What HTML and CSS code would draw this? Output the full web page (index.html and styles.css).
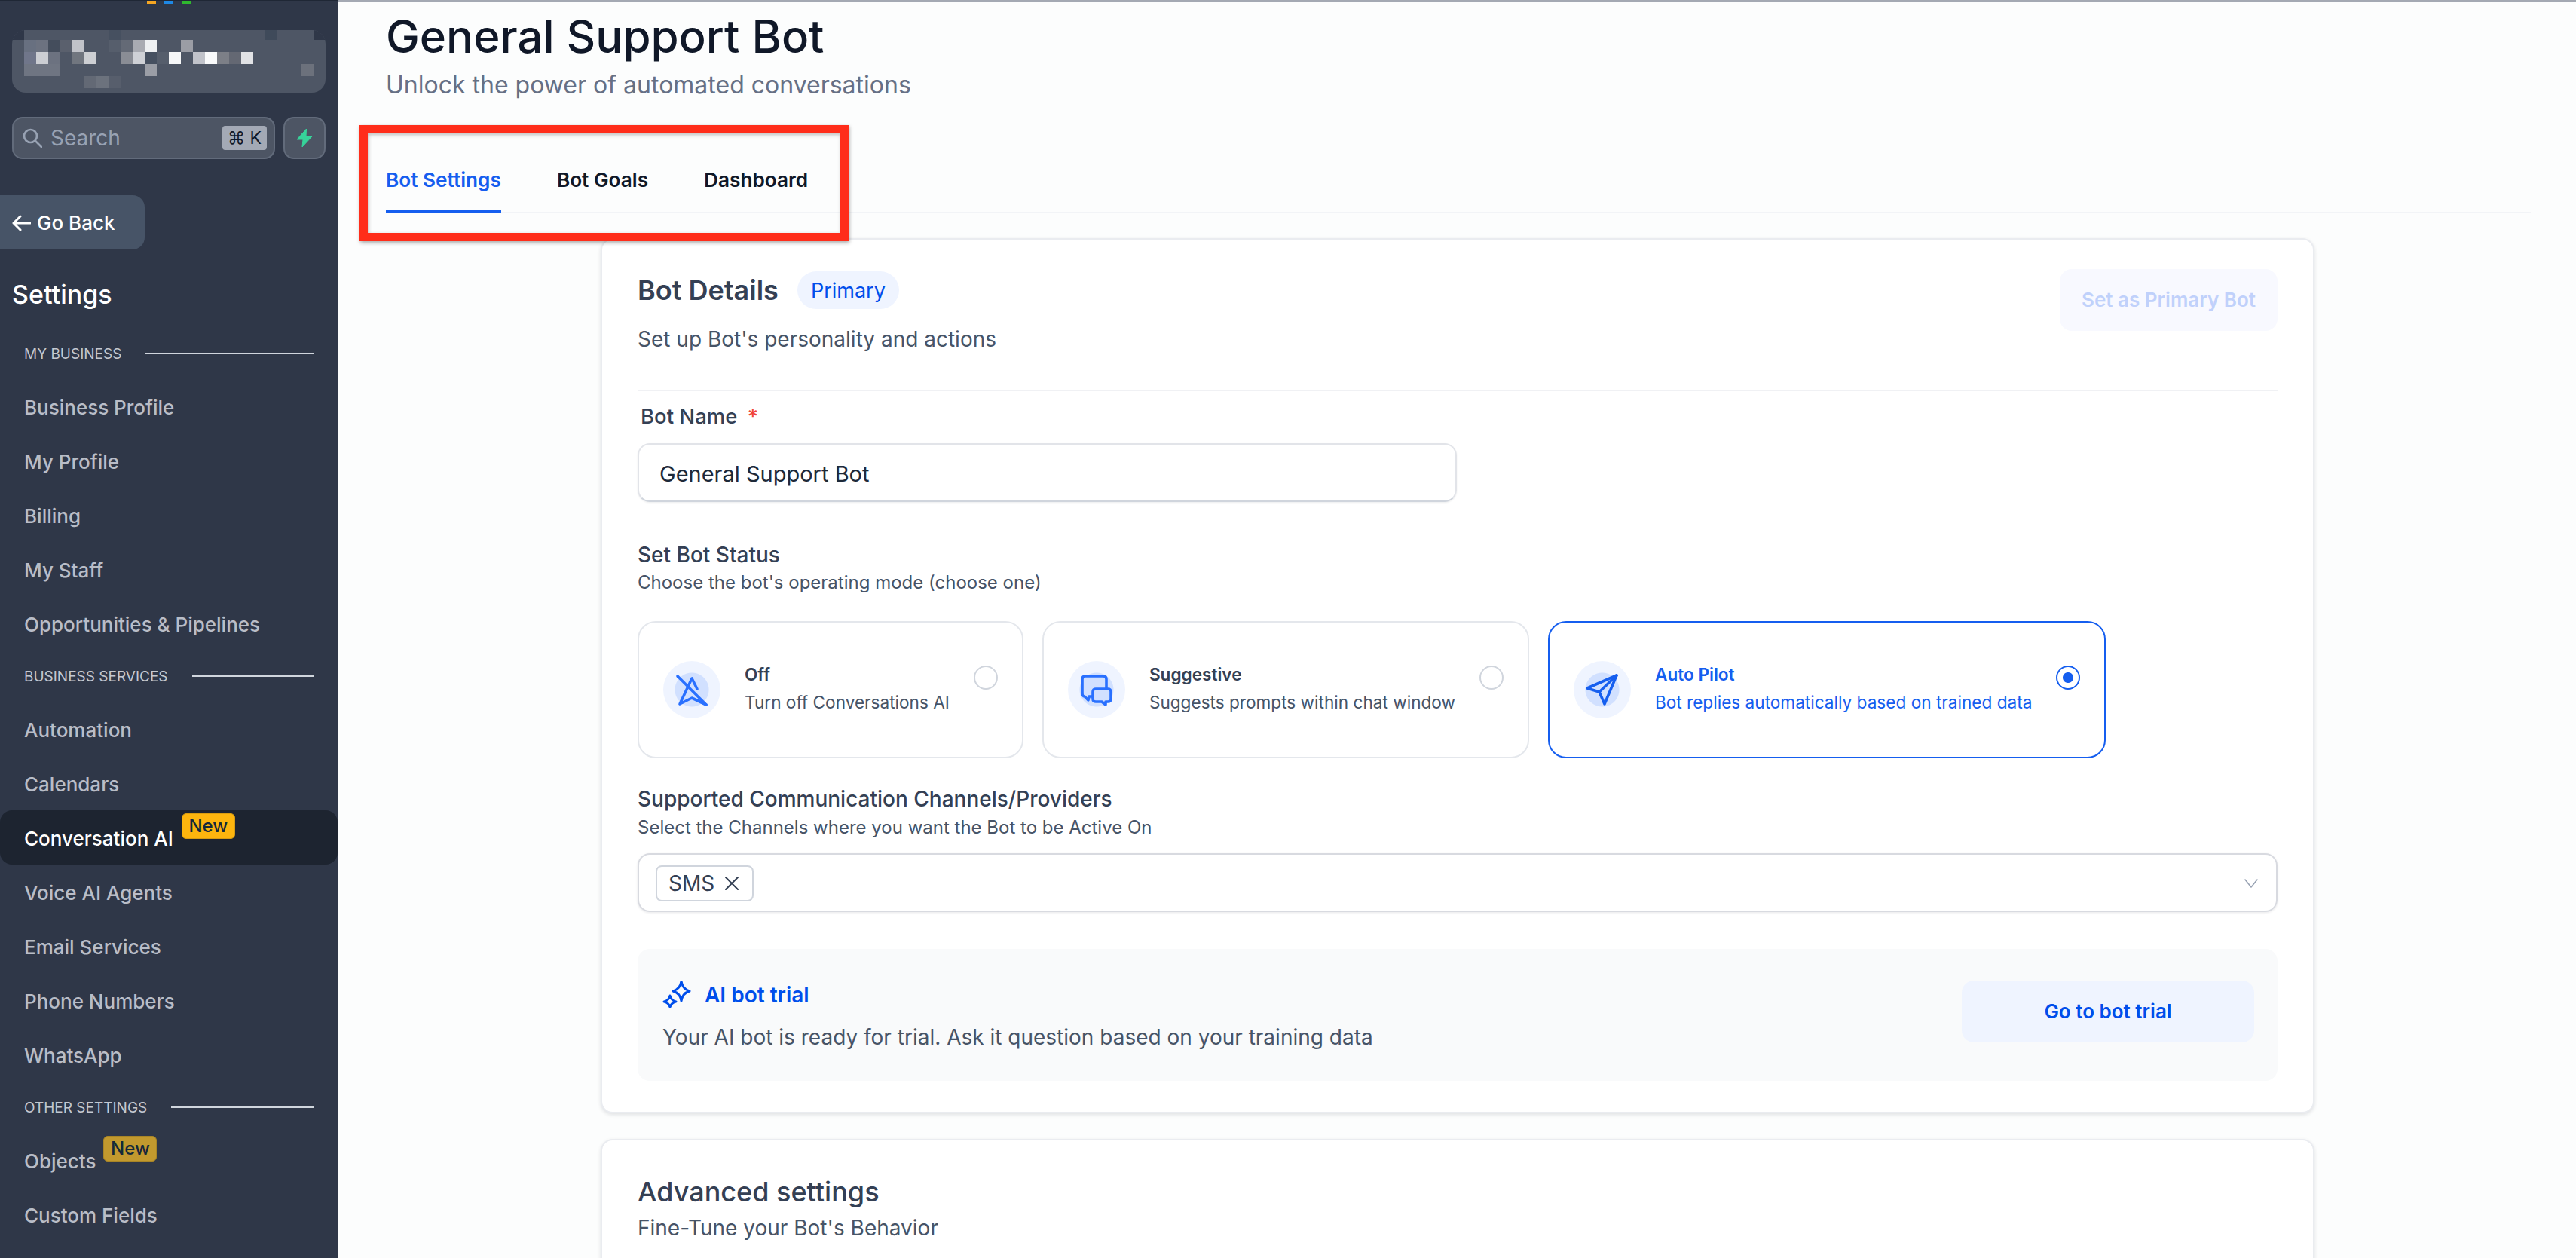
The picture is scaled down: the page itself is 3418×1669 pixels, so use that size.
FILE: index.html
```html
<!DOCTYPE html>
<html lang="en">
<head>
<meta charset="utf-8">
<title>General Support Bot</title>
<link rel="stylesheet" href="styles.css">
</head>
<body>
<div class="app">
  <aside class="sidebar">
    <div class="dots"><i class="dot dot-o"></i><i class="dot dot-b"></i><i class="dot dot-g"></i></div>
    <div class="account">
      <svg width="416" height="83" viewBox="0 0 416 83" shape-rendering="crispEdges">
        <rect x="0" y="0" width="16" height="13" fill="#2f3748"/>
        <rect x="16" y="0" width="384" height="13" fill="#4e5665"/>
        <rect x="128" y="0" width="16" height="13" fill="#465060"/>
        <rect x="336" y="0" width="16" height="13" fill="#3f4a5a"/>
        <rect x="400" y="0" width="16" height="13" fill="#2f3748"/>
        <rect x="16" y="13" width="16" height="16" fill="#687080"/>
        <rect x="32" y="13" width="16" height="16" fill="#6c7280"/>
        <rect x="48" y="13" width="16" height="16" fill="#444d5c"/>
        <rect x="64" y="13" width="16" height="16" fill="#5a606d"/>
        <rect x="80" y="13" width="16" height="16" fill="#c1c3c9"/>
        <rect x="128" y="13" width="16" height="16" fill="#565e6c"/>
        <rect x="144" y="13" width="16" height="16" fill="#646a76"/>
        <rect x="160" y="13" width="16" height="16" fill="#a9abb2"/>
        <rect x="176" y="13" width="16" height="16" fill="#eef0f2"/>
        <rect x="224" y="13" width="16" height="16" fill="#9b9da5"/>
        <rect x="16" y="29" width="16" height="16" fill="#70768a"/>
        <rect x="32" y="29" width="16" height="16" fill="#ccced3"/>
        <rect x="48" y="29" width="16" height="16" fill="#6c7280"/>
        <rect x="80" y="29" width="16" height="16" fill="#71767f"/>
        <rect x="96" y="29" width="16" height="16" fill="#cdcfd3"/>
        <rect x="144" y="29" width="16" height="16" fill="#8a8d95"/>
        <rect x="160" y="29" width="16" height="16" fill="#cfd1d6"/>
        <rect x="176" y="29" width="16" height="16" fill="#465060"/>
        <rect x="192" y="29" width="16" height="16" fill="#565e6c"/>
        <rect x="208" y="29" width="16" height="16" fill="#f6f7f8"/>
        <rect x="240" y="29" width="16" height="16" fill="#c1c3ca"/>
        <rect x="256" y="29" width="16" height="16" fill="#f9fafb"/>
        <rect x="272" y="29" width="16" height="16" fill="#7c7f87"/>
        <rect x="288" y="29" width="16" height="16" fill="#646873"/>
        <rect x="304" y="29" width="16" height="16" fill="#e1e2e5"/>
        <rect x="16" y="45" width="48" height="16" fill="#6f7582"/>
        <rect x="176" y="45" width="16" height="16" fill="#9b9ea6"/>
        <rect x="384" y="45" width="16" height="16" fill="#6c717c"/>
        <rect x="96" y="61" width="16" height="16" fill="#636975"/>
        <rect x="112" y="61" width="16" height="16" fill="#6c727d"/>
        <rect x="128" y="61" width="16" height="16" fill="#575e6c"/>
      </svg>
    </div>
    <div class="search-row">
      <div class="search">
        <svg class="search-icon" width="26" height="26" viewBox="0 0 26 26" fill="none" stroke="#98a2b3" stroke-width="2.6" stroke-linecap="round"><circle cx="10.5" cy="10.5" r="8.5"/><line x1="17" y1="17" x2="25" y2="25"/></svg>
        <span class="search-text">Search</span>
        <kbd class="kbd">⌘ K</kbd>
      </div>
      <div class="bolt">
        <svg width="22" height="24" viewBox="0 0 22 24"><path d="M13.5 0 L1 14 L9 14 L8 24 L21 10 L13 10 Z" fill="#37d39a" stroke="#37d39a" stroke-width="1" stroke-linejoin="round"/></svg>
      </div>
    </div>
    <a class="back">
      <svg width="25" height="22" viewBox="0 0 25 22" fill="none" stroke="#fff" stroke-width="3" stroke-linecap="round" stroke-linejoin="round"><path d="M24 11H2M11 2L2 11l9 9"/></svg>
      <span>Go Back</span>
    </a>
    <h2 class="side-title">Settings</h2>
    <nav class="nav">
      <div class="section"><span>MY BUSINESS</span><i></i></div>
      <a class="item">Business Profile</a>
      <a class="item">My Profile</a>
      <a class="item">Billing</a>
      <a class="item">My Staff</a>
      <a class="item">Opportunities &amp; Pipelines</a>
      <div class="section"><span>BUSINESS SERVICES</span><i></i></div>
      <a class="item">Automation</a>
      <a class="item">Calendars</a>
      <a class="item active">Conversation AI<b class="new">New</b></a>
      <a class="item">Voice AI Agents</a>
      <a class="item">Email Services</a>
      <a class="item">Phone Numbers</a>
      <a class="item">WhatsApp</a>
      <div class="section"><span>OTHER SETTINGS</span><i></i></div>
      <a class="item">Objects<b class="new new-dim">New</b></a>
      <a class="item">Custom Fields</a>
    </nav>
  </aside>

  <main class="main">
    <h1 class="page-title">General Support Bot</h1>
    <p class="page-sub">Unlock the power of automated conversations</p>
    <div class="tabs">
      <a class="tab tab-active">Bot Settings</a>
      <a class="tab">Bot Goals</a>
      <a class="tab">Dashboard</a>
    </div>
    <div class="annotation"></div>

    <section class="card">
      <div class="card-head">
        <div>
          <div class="head-title"><h3 class="h3">Bot Details</h3><span class="pill">Primary</span></div>
          <p class="head-sub">Set up Bot's personality and actions</p>
        </div>
        <button class="btn-disabled">Set as Primary Bot</button>
      </div>
      <div class="divider"></div>
      <label class="bot-label">Bot Name <span class="req">*</span></label>
      <div class="input">General Support Bot</div>

      <div class="field-title status-title">Set Bot Status</div>
      <div class="field-sub">Choose the bot's operating mode (choose one)</div>
      <div class="modes">
        <div class="mode">
          <span class="ring"><svg width="76" height="76" viewBox="0 0 76 76" fill="none" stroke="#2970ff" stroke-width="3.6" stroke-linecap="round" stroke-linejoin="round"><path d="M45 37L38 23L22 57L38 49L57 58"/><path d="M19 20L57 58"/></svg></span>
          <div class="mode-text"><div class="mode-title">Off</div><div class="mode-desc">Turn off Conversations AI</div></div>
          <i class="radio"></i>
        </div>
        <div class="mode">
          <span class="ring"><svg width="76" height="76" viewBox="0 0 76 76" fill="none" stroke="#2970ff" stroke-width="3.6" stroke-linecap="round" stroke-linejoin="round"><path d="M33 47H28L27 52L22 47C20 47 19 45 19 43V24C19 21 21 20 23 20H47C49 20 51 21 51 24V37"/><path d="M37 37H53C56 37 57 38 57 41V50C57 53 56 54 53 54H50V58L45 54H37C34 54 33 53 33 50V41C33 38 34 37 37 37Z"/></svg></span>
          <div class="mode-text"><div class="mode-title">Suggestive</div><div class="mode-desc">Suggests prompts within chat window</div></div>
          <i class="radio"></i>
        </div>
        <div class="mode mode-on">
          <span class="ring"><svg width="76" height="76" viewBox="0 0 76 76" fill="none" stroke="#155eef" stroke-width="3.6" stroke-linecap="round" stroke-linejoin="round"><path d="M57 19L18 36L34 41L41 57Z"/><path d="M34 41L57 19"/></svg></span>
          <div class="mode-text"><div class="mode-title">Auto Pilot</div><div class="mode-desc">Bot replies automatically based on trained data</div></div>
          <i class="radio radio-on"></i>
        </div>
      </div>

      <div class="field-title channels-title">Supported Communication Channels/Providers</div>
      <div class="field-sub channels-sub">Select the Channels where you want the Bot to be Active On</div>
      <div class="select">
        <span class="chip">SMS<svg width="18" height="18" viewBox="0 0 18 18" fill="none" stroke="#344054" stroke-width="2" stroke-linecap="round"><path d="M1 1L17 17M17 1L1 17"/></svg></span>
        <svg class="chev" width="18" height="12" viewBox="0 0 18 12" fill="none" stroke="#98a2b3" stroke-width="1.6" stroke-linecap="round" stroke-linejoin="round"><path d="M1 1L9 11L17 1"/></svg>
      </div>

      <div class="trial">
        <div>
          <div class="trial-title">
            <svg width="38" height="36" viewBox="0 0 38 36" fill="none" stroke="#004eeb" stroke-width="3" stroke-linejoin="round"><path d="M25 1C26 8 29 12 36 14C29 16 26 20 25 27C24 20 21 16 14 14C21 12 24 8 25 1Z"/><path d="M10 20C11 24 13 27 18 28C13 29 11 32 10 35C9 32 7 29 2 28C7 27 9 24 10 20Z"/></svg>
            <span class="trial-name">AI bot trial</span>
          </div>
          <p class="trial-desc">Your AI bot is ready for trial. Ask it question based on your training data</p>
        </div>
        <button class="btn-trial">Go to bot trial</button>
      </div>
    </section>

    <section class="card card-2">
      <h3 class="adv-title">Advanced settings</h3>
      <p class="adv-sub">Fine-Tune your Bot's Behavior</p>
    </section>
  </main>
</div>
</body>
</html>
```
FILE: styles.css
```css
* { box-sizing: border-box; }
html, body { margin: 0; height: 100%; overflow: hidden; }
body { font-family: Inter, "DejaVu Sans", sans-serif; color: #344054; background: #fcfdfd; }
h1, h2, h3, p { margin: 0; font-weight: inherit; }
button { font-family: inherit; border: 0; }
kbd { font-family: inherit; }

.app { display: flex; height: 1669px; }

/* sidebar */
.sidebar { width: 448px; flex: none; background: #2f3748; border-top: 1px solid #1f2735; overflow: hidden; }
.dots { display: flex; gap: 11px; height: 3px; margin-left: 195px; }
.dot { display: block; width: 12px; height: 4px; }
.dot-o { background: #f5a623; }
.dot-b { background: #1e88e5; }
.dot-g { background: #2fb82f; }
.account { width: 416px; height: 83px; margin: 36px 0 0 16px; border-radius: 18px; overflow: hidden; background: #4e5665; }
.account svg { display: block; }
.search-row { display: flex; gap: 11px; margin: 32px 16px 0; }
.search { flex: 1; height: 56px; display: flex; align-items: center; padding: 0 9px 0 12px; background: #4d5564; border: 2px solid #626b7b; border-radius: 14px; }
.search-text { margin-left: 11px; font-size: 28px; color: #98a2b3; }
.kbd { margin-left: auto; width: 59px; height: 32px; display: flex; align-items: center; justify-content: center; background: #a3a9b5; border-radius: 4px; color: #101828; font-size: 23px; }
.bolt { width: 56px; height: 56px; display: flex; align-items: center; justify-content: center; background: #4d5564; border: 2px solid #626b7b; border-radius: 14px; }
.back { display: flex; align-items: center; gap: 8px; width: 192px; height: 72px; margin-top: 48px; padding: 1px 0 0 16px; background: #475467; border-radius: 0 16px 16px 0; color: #fff; font-size: 26px; font-weight: 500; }
.side-title { margin: 36px 0 0 16px; font-size: 34px; line-height: 48px; font-weight: 500; color: #fff; }
.nav { margin-top: 20px; }
.section { height: 68px; display: flex; align-items: center; gap: 32px; padding: 0 32px; }
.section span { font-size: 19px; color: #c4c8d0; white-space: nowrap; }
.section i { flex: 1; height: 2px; background: #d0d5dd; }
.item { height: 72px; display: flex; align-items: center; padding: 2px 0 0 32px; border-radius: 16px; font-size: 26px; font-weight: 500; color: #b9bdc7; }
.active { background: #1d2430; color: #fff; }
.new { align-self: flex-start; margin: 2px 0 0 11px; height: 34px; line-height: 32px; width: 71px; text-align: center; background: #fdb50e; border: 1px solid #d99c10; border-radius: 6px; color: #14283a; font-size: 24px; font-weight: 500; }
.new-dim { background: #c2992e; border-color: #a98526; margin-left: 10px; }

/* main */
.main { flex: 1; min-width: 0; padding: 12px 60px 0 64px; border-top: 2px solid #a4a9b3; position: relative; }
.page-title { font-size: 60px; line-height: 68px; font-weight: 500; color: #101828; }
.page-sub { margin-top: 9px; font-size: 32px; line-height: 44px; color: #667085; }
.tabs { display: flex; gap: 74px; margin-top: 85px; border-bottom: 2px solid #f2f4f7; }
.tab { height: 63px; margin-bottom: -2px; line-height: 38px; font-size: 26.2px; font-weight: 600; color: #101828; }
.tab-active { color: #155eef; border-bottom: 4px solid #155eef; }
.annotation { position: absolute; left: 29px; top: 164px; width: 649px; height: 154px; border: 11px solid #ff2d1a; box-shadow: 1px 2px 5px rgba(0,0,0,.35), inset 1px 2px 5px rgba(0,0,0,.25); }

.card { width: 2274px; margin: 33px 0 0 285px; padding: 39px 47px 41px; background: #fff; border: 2px solid #eaecf0; border-radius: 16px; box-shadow: 0 2px 5px rgba(16,24,40,.12); }
.card-head { display: flex; justify-content: space-between; align-items: flex-start; height: 160px; }
.head-title { display: flex; align-items: center; gap: 25px; margin-top: 3px; }
.h3 { font-size: 36px; line-height: 50px; font-weight: 600; color: #344054; }
.pill { height: 50px; padding: 0 18px; display: flex; align-items: center; border-radius: 25px; background: #eff4ff; color: #004eeb; font-size: 27px; }
.head-sub { margin-top: 22px; font-size: 28px; line-height: 36px; color: #475467; }
.btn-disabled { width: 289px; height: 82px; padding-bottom: 2px; border-radius: 16px; background: #f8f9ff; color: #c0d1fb; font-size: 26px; font-weight: 600; }
.divider { height: 2px; background: #f0f1f4; }
.bot-label { display: block; margin: 15px 0 0 4px; font-size: 27.5px; line-height: 36px; font-weight: 500; color: #344054; }
.req { margin-left: 6px; color: #f04438; }
.input { width: 1087px; height: 78px; margin-top: 18px; padding: 2px 0 0 27px; display: flex; align-items: center; border: 2px solid #e2e4e9; border-bottom-color: #d0d5dd; border-radius: 16px; box-shadow: 0 1px 2px rgba(16,24,40,.08); font-size: 29px; color: #1d2939; }
.field-title { font-size: 28px; line-height: 36px; font-weight: 500; color: #344054; }
.status-title { margin-top: 52px; }
.field-sub { margin-top: 3px; font-size: 24px; line-height: 32px; color: #475467; }
.channels-title { margin-top: 36px; }
.channels-sub { margin-top: 4px; }

.modes { display: flex; gap: 25px; margin-top: 35px; }
.mode { height: 182px; display: flex; align-items: center; padding: 0 32px; border: 2px solid #e4e7ec; border-radius: 24px; }
.ring { width: 76px; height: 76px; flex: none; border-radius: 50%; background: radial-gradient(circle, #d1e0ff 0 22px, #eff4ff 23px); }
.ring svg { display: block; }
.mode-text { margin-left: 32px; align-self: flex-start; margin-top: 53px; }
.mode-title { font-size: 22.6px; line-height: 32px; font-weight: 600; color: #344054; }
.mode-desc { margin-top: 5px; font-size: 22.6px; line-height: 32px; color: #475467; white-space: nowrap; }
.radio { display: block; width: 32px; height: 32px; flex: none; margin-left: 32px; align-self: flex-start; margin-top: 57px; border: 2px solid #d0d5dd; border-radius: 50%; }
.mode-on { border-color: #155eef; }
.mode-on .mode-title, .mode-on .mode-desc { color: #155eef; }
.radio-on { border-color: #155eef; background: radial-gradient(circle, #155eef 0 6.5px, #fff 7.5px); }

.select { height: 78px; margin-top: 18px; padding: 2px 24px 0 22px; display: flex; align-items: center; justify-content: space-between; border: 2px solid #d8dae0; border-radius: 16px; box-shadow: 0 1px 3px rgba(16,24,40,.1); }
.chip { width: 130px; height: 48px; padding-left: 15px; display: flex; align-items: center; gap: 14px; border: 2px solid #d0d5dd; border-radius: 8px; font-size: 28px; color: #344054; }

.trial { height: 175px; margin-top: 49px; padding: 42px 31px 0 33px; display: flex; justify-content: space-between; align-items: flex-start; background: #f9fafb; border-radius: 16px; }
.trial-title { display: flex; align-items: center; gap: 18px; height: 36px; font-size: 28px; font-weight: 600; color: #004eeb; }
.trial-name { padding-top: 2px; }
.trial-desc { margin-top: 21px; font-size: 28px; line-height: 36px; color: #475467; }
.btn-trial { width: 388px; height: 82px; padding-bottom: 2px; border-radius: 16px; background: #eff4ff; color: #004eeb; font-size: 26px; font-weight: 600; }

.card-2 { margin-top: 34px; padding: 46px 47px 80px; }
.adv-title { font-size: 36px; line-height: 44px; font-weight: 500; color: #344054; }
.adv-sub { margin-top: 8px; font-size: 28px; line-height: 36px; color: #475467; }
```
